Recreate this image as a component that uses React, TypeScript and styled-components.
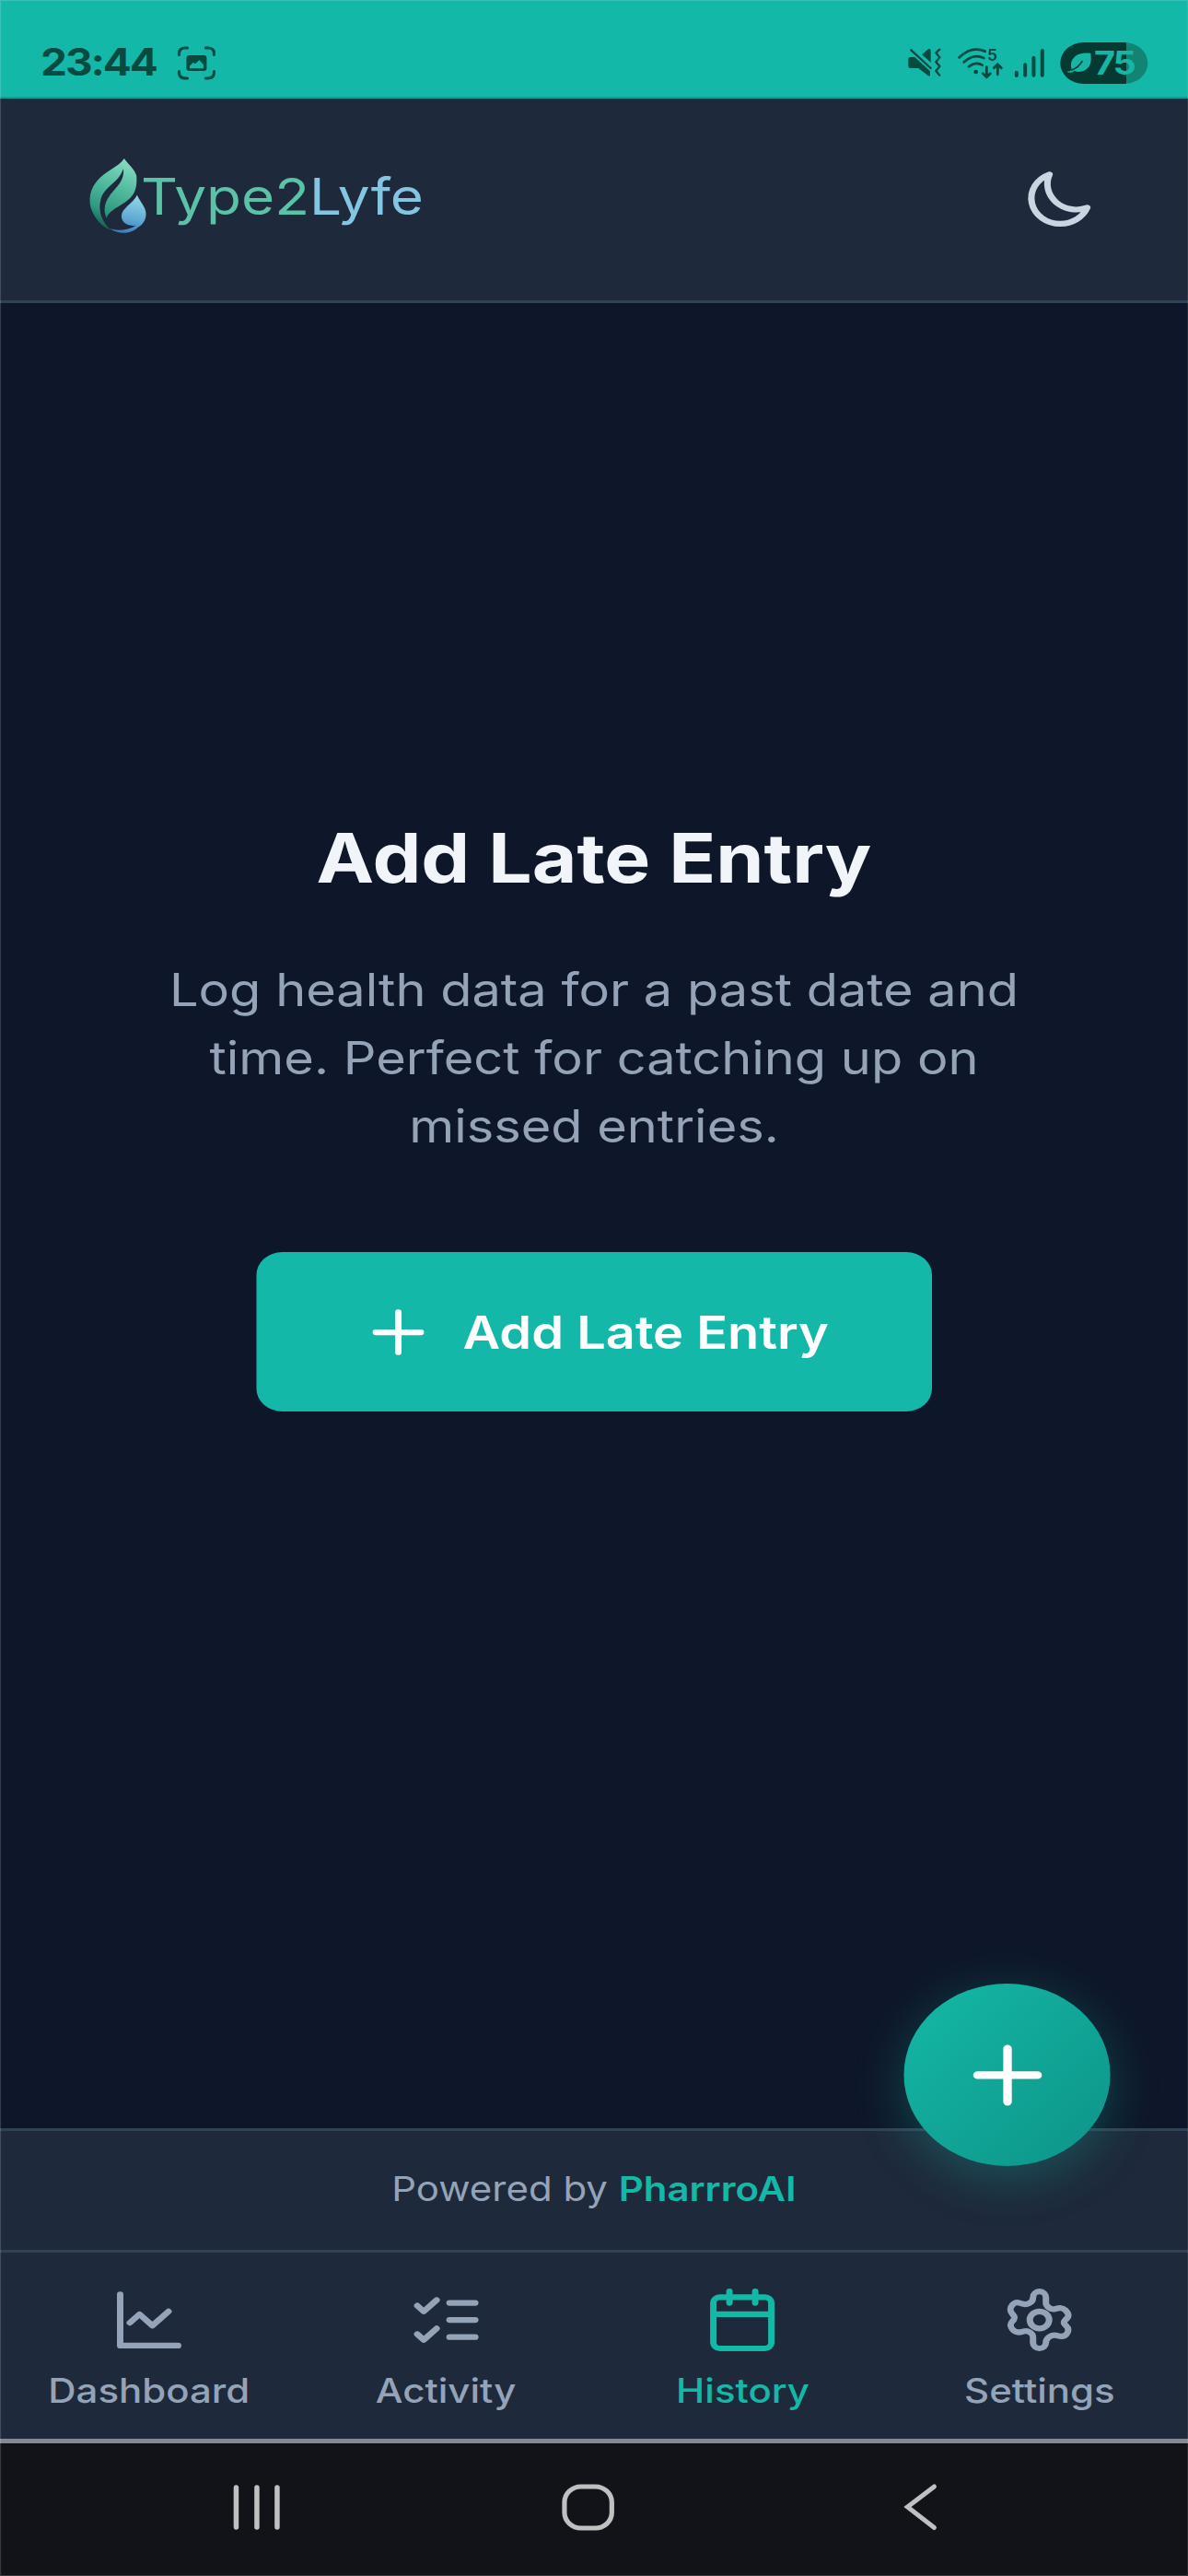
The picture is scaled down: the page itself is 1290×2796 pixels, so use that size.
import React from "react";
import styled, { createGlobalStyle } from "styled-components";

const STRETCH = 1.132;
const x = (px: number) => `${(px / STRETCH).toFixed(2)}px`;

const GlobalStyle = createGlobalStyle`
  * { box-sizing: border-box; }
  html, body { margin: 0; padding: 0; background: #0f172a; }
  body { width: 1290px; height: 2796px; overflow: hidden; }
`;

const Screen = styled.div`
  position: relative;
  display: flex;
  flex-direction: column;
  width: ${x(1290)};
  height: 2796px;
  transform: scaleX(${STRETCH});
  transform-origin: 0 0;
  background: #0e1729;
  color: #f1f5f9;
  font-family: Inter, "Liberation Sans", sans-serif;
  overflow: hidden;

  &::after {
    content: "";
    position: absolute;
    inset: 0;
    box-shadow: inset 0 0 0 1px rgba(255, 255, 255, 0.16);
    pointer-events: none;
  }
`;

const StatusBar = styled.div`
  display: flex;
  justify-content: space-between;
  height: 107px;
  padding: 30px ${x(44)} 0 ${x(44)};
  background: #14b8a8;
  border-bottom: 2px solid #179c93;
  color: #064a40;
`;

const StatusGroup = styled.div<{ $gap: number }>`
  display: flex;
  align-items: center;
  height: 76px;
  gap: ${(p) => x(p.$gap)};
`;

const Clock = styled.span`
  font-size: 40.6px;
  font-weight: 700;
  line-height: 76px;
  width: ${x(125)};
  letter-spacing: -1.8px;
  white-space: nowrap;
`;

const Battery = styled.div`
  display: flex;
  align-items: center;
  width: ${x(95)};
  height: 45px;
  margin-left: ${x(5)};
  padding-left: ${x(7)};
  gap: ${x(3)};
  border-radius: 23px;
  background: linear-gradient(90deg, #053a33 75%, #118474 75%);
  color: #17b5a3;
  font-size: 35px;
  font-weight: 700;
  letter-spacing: -1.8px;
`;

const Header = styled.header`
  display: flex;
  justify-content: space-between;
  align-items: flex-start;
  height: 221.5px;
  padding: 64px ${x(97)} 0 ${x(96)};
  background: #1e293b;
  border-bottom: 3px solid #334155;
`;

const Brand = styled.div`
  display: flex;
  align-items: flex-start;
`;

const BrandName = styled.span`
  margin-left: ${x(-7)};
  margin-top: 8px;
  font-size: 54.8px;
  line-height: 68px;
  color: #5ac2a6;
  white-space: nowrap;
`;

const BrandAccent = styled.span`
  color: #84c6e2;
`;

const ThemeButton = styled.button`
  display: flex;
  margin: 7px 0 0;
  padding: 0;
  border: 0;
  background: none;
  color: #cbd5e1;
`;

const Main = styled.main`
  flex: 1;
  display: flex;
  flex-direction: column;
  align-items: center;
  padding-top: 547px;
`;

const Title = styled.h1`
  margin: 0 0 50px;
  font-size: 74.2px;
  line-height: 111.3px;
  font-weight: 700;
  white-space: nowrap;
`;

const Description = styled.p`
  margin: 0 0 100px;
  font-size: 49.4px;
  line-height: 74.2px;
  text-align: center;
  color: #94a3b8;
  white-space: nowrap;
`;

const PrimaryButton = styled.button`
  display: flex;
  align-items: center;
  width: ${x(733)};
  height: 173px;
  padding: 0 0 0 ${x(112)};
  gap: ${x(28)};
  border: 0;
  border-radius: 24.7px;
  background: #14b8a8;
  color: #fff;
  font: 600 49.4px/74px Inter, sans-serif;
  white-space: nowrap;
`;

const Credit = styled.div`
  display: flex;
  justify-content: center;
  height: 131.5px;
  padding-top: 40px;
  background: #1e293b;
  border-top: 3px solid #334155;
  color: #94a3b8;
  font-size: 37.1px;
  line-height: 46px;
  white-space: pre;
`;

const CreditName = styled.span`
  font-weight: 600;
  color: #14b8a6;
`;

const TabBar = styled.nav`
  display: grid;
  grid-template-columns: repeat(4, 1fr);
  height: 205.5px;
  padding-left: 0.5px;
  background: #1e293b;
  border-top: 3px solid #334155;
`;

const Tab = styled.div<{ $active?: boolean }>`
  display: flex;
  flex-direction: column;
  align-items: center;
  padding-top: 36px;
  gap: 16.5px;
  color: ${(p) => (p.$active ? "#14b8a6" : "#94a3b8")};
  font-size: 37.1px;
  font-weight: 500;
  line-height: 48px;
`;

const SystemBar = styled.div`
  display: flex;
  height: 149px;
  padding: 44px 0 0 ${x(252)};
  background: #121318;
  border-top: 5px solid #868a93;
  color: #c0c0c2;
`;

const SystemKey = styled.div<{ $before: number }>`
  display: flex;
  margin-left: ${(p) => x(p.$before)};
`;

const Fab = styled.button`
  position: absolute;
  left: ${x(982)};
  top: 2153px;
  display: flex;
  align-items: center;
  justify-content: center;
  width: ${x(224)};
  height: 198px;
  padding: 0;
  border: 0;
  border-radius: 50%;
  background: linear-gradient(135deg, #14b8a6, #0d9488);
  box-shadow: 0 12px 50px rgba(20, 184, 166, 0.3);
  color: #fff;
`;

const Drawing = styled.svg<{ $w: number; $h: number }>`
  display: block;
  flex: none;
  width: ${(p) => x(p.$w)};
  height: ${(p) => p.$h}px;
  overflow: visible;
`;

type GlyphProps = { w: number; h: number; box?: string; children: React.ReactNode };

const Glyph = ({ w, h, box, children }: GlyphProps) => (
  <Drawing $w={w} $h={h} viewBox={box ?? `0 0 ${w} ${h}`} preserveAspectRatio="none">
    {children}
  </Drawing>
);

const Icon = ({ size = 24, children }: { size?: number; children: React.ReactNode }) => (
  <Glyph w={size * 3.5} h={size * 3.091} box="0 0 24 24">
    <g fill="none" stroke="currentColor" strokeWidth="2" strokeLinecap="round" strokeLinejoin="round">
      {children}
    </g>
  </Glyph>
);

const CaptureIcon = () => (
  <Glyph w={42} h={37}>
    <g fill="none" stroke="currentColor" strokeWidth="3.2" strokeLinecap="round">
      <path d="M2 9.5V8q0-6 7-6h2M31 2h2q7 0 7 6v1.5M40 27.5v1.5q0 6-7 6h-2M11 35H9q-7 0-7-6v-1.5" />
    </g>
    <path
      fillRule="evenodd"
      d="M13 10h16q3 0 3 3v11q0 3-3 3H13q-3 0-3-3V13q0-3 3-3zM13.5 24.3h15v-4l-4.5-5-4.5 4-2.2-1.5-3.8 4z"
      fill="currentColor"
    />
  </Glyph>
);

const MuteIcon = () => (
  <Glyph w={36} h={32} box="0 0 108 96">
    <path
      d="M8 30H22L72 76V88Q72 95 66 91L34 66H8Q1 66 1 59V37Q1 30 8 30ZM45 22L66 4Q74 1 74 8V47Z"
      fill="currentColor"
    />
    <path d="M10 7L74 66" stroke="currentColor" strokeWidth="7" strokeLinecap="round" />
    <path
      d="M103 5L91 16L103 31L91 46L103 60L91 75L103 89"
      fill="none"
      stroke="currentColor"
      strokeWidth="7"
      strokeLinecap="round"
      strokeLinejoin="round"
    />
  </Glyph>
);

const WifiText = styled.text`
  font: 600 52px Inter, sans-serif;
  fill: currentColor;
`;

const WifiIcon = () => (
  <Glyph w={49} h={33} box="0 0 147 99">
    <g fill="none" stroke="currentColor" strokeWidth="8.5" strokeLinecap="round">
      <path d="M4 31Q44-8 88 11M19 46Q52 17 84 33M35 61Q58 43 79 56" />
      <path d="M93 62V95M81 83L93 95L105 83M129 87V54M117 65L129 53L141 65" />
    </g>
    <circle cx="58" cy="78" r="7" fill="currentColor" />
    <WifiText x="95" y="43">5</WifiText>
  </Glyph>
);

const SignalIcon = () => (
  <Glyph w={33} h={31} box="0 0 99 93">
    <path
      d="M7 77V87M35 52V86M63 29V86M91 6V86"
      fill="none"
      stroke="currentColor"
      strokeWidth="12"
      strokeLinecap="round"
    />
  </Glyph>
);

const LeafIcon = () => (
  <Glyph w={27} h={22} box="0 0 80 66">
    <path d="M1 62Q12 62 17 56Q8 32 26 14Q42-1 78 2Q84 42 62 56Q42 68 26 60Q12 70 1 62Z" fill="currentColor" />
    <path d="M17 57Q38 50 50 29" stroke="#053a33" strokeWidth="5" fill="none" strokeLinecap="round" />
  </Glyph>
);

const LogoMark = () => (
  <Glyph w={64} h={83} box="110 93 192 249">
    <defs>
      <linearGradient id="leaf" x1="0.6" y1="0" x2="0.35" y2="1">
        <stop offset="0" stopColor="#83d9c0" />
        <stop offset="0.4" stopColor="#51b99d" />
        <stop offset="0.75" stopColor="#2e9880" />
        <stop offset="1" stopColor="#14594f" />
      </linearGradient>
      <linearGradient id="drop" x1="0.6" y1="0" x2="0.4" y2="1">
        <stop offset="0" stopColor="#93d8e6" />
        <stop offset="0.6" stopColor="#5fa9d4" />
        <stop offset="1" stopColor="#3d7dbd" />
      </linearGradient>
    </defs>
    <path
      fill="url(#leaf)"
      d="M226 96C208 124 166 135 136 171C107 206 108 251 130 284C143 305 160 321 184 330C151 303 141 265 149 232C160 186 207 178 223 130C228 170 199 190 178 218C158 245 160 268 168 290C178 265 200 259 222 243C250 224 270 207 266 152C259 130 240 116 226 96Z"
    />
    <path
      fill="url(#drop)"
      d="M268 215C278 238 296 252 297 276C297 297 286 312 270 321C248 343 206 344 180 325C205 333 242 329 264 314C234 318 217 304 217 283C218 257 254 243 268 215Z"
    />
  </Glyph>
);

const tabs = [
  {
    label: "Dashboard",
    icon: <path d="M3 3v18h18M6 13l3-3 4 4 5-5" />,
  },
  {
    label: "Activity",
    icon: <path d="m3 17 2 2 4-4M3 7l2 2 4-4M13 6h8M13 12h8M13 18h8" />,
  },
  {
    label: "History",
    active: true,
    icon: (
      <>
        <rect x="3" y="4" width="18" height="18" rx="2" />
        <path d="M16 2v4M8 2v4M3 10h18" />
      </>
    ),
  },
  {
    label: "Settings",
    icon: (
      <>
        <path d="M12 2a2 2.1 0 0 1 2 2.1V6.1C14 7.2 15.6 8.5 16.7 8.2C18.4 7.7 19.2 7.6 20.1 8.6C21 9.6 21.3 10.7 20.5 11.5C19.3 12.7 19.3 13.1 20.4 14.2C21.1 14.9 21.1 16.2 20.4 17C19.6 18 18.6 17.9 17.6 17.5C15.8 16.9 14 18.2 14 20A2 2 0 0 1 10 20V18C10 16.7 8.4 15.5 7.2 16C5.7 16.6 4.6 16.5 3.7 15.4C2.9 14.4 2.8 13.3 3.6 12.5C4.5 11.5 4.5 10.9 3.6 9.9C2.8 9 2.8 7.7 3.6 6.7C4.4 5.7 5.4 5.7 6.3 6.2C8.2 7 10 5.9 10 4.1A2 2.1 0 0 1 12 2Z" />
        <circle cx="12" cy="12" r="3" />
      </>
    ),
  },
];

export default function App() {
  return (
    <>
      <GlobalStyle />
      <Screen>
        <StatusBar>
          <StatusGroup $gap={23}>
            <Clock>23:44</Clock>
            <CaptureIcon />
          </StatusGroup>
          <StatusGroup $gap={12}>
            <StatusGroup $gap={18}>
              <MuteIcon />
              <WifiIcon />
            </StatusGroup>
            <StatusGroup $gap={12}>
              <SignalIcon />
              <Battery>
                <LeafIcon />
                75
              </Battery>
            </StatusGroup>
          </StatusGroup>
        </StatusBar>

        <Header>
          <Brand>
            <LogoMark />
            <BrandName>
              Type2<BrandAccent>Lyfe</BrandAccent>
            </BrandName>
          </Brand>
          <ThemeButton aria-label="Toggle theme">
            <Icon>
              <path d="M20.354 15.354A9 9 0 018.646 3.646 9.003 9.003 0 0012 21a9.003 9.003 0 008.354-5.646z" />
            </Icon>
          </ThemeButton>
        </Header>

        <Main>
          <Title>Add Late Entry</Title>
          <Description>
            Log health data for a past date and
            <br />
            time. Perfect for catching up on
            <br />
            missed entries.
          </Description>
          <PrimaryButton>
            <Icon>
              <path d="M12 5v14M5 12h14" />
            </Icon>
            Add Late Entry
          </PrimaryButton>
        </Main>

        <Credit>
          Powered by <CreditName>PharrroAI</CreditName>
        </Credit>

        <TabBar>
          {tabs.map((tab) => (
            <Tab key={tab.label} $active={tab.active}>
              <Icon>{tab.icon}</Icon>
              {tab.label}
            </Tab>
          ))}
        </TabBar>

        <SystemBar>
          <SystemKey $before={0}>
            <Glyph w={52} h={51}>
              <path d="M4 4V47M26.5 4V47M48.5 4V47" stroke="currentColor" strokeWidth="5.5" strokeLinecap="round" />
            </Glyph>
          </SystemKey>
          <SystemKey $before={306}>
            <Glyph w={57} h={51}>
              <rect x="2.8" y="3" width="51.4" height="45" rx="18" ry="17" fill="none" stroke="currentColor" strokeWidth="5.2" />
            </Glyph>
          </SystemKey>
          <SystemKey $before={314}>
            <Glyph w={36} h={51}>
              <path d="M33 3L4 25L33 47.5" fill="none" stroke="currentColor" strokeWidth="5" strokeLinecap="round" />
            </Glyph>
          </SystemKey>
        </SystemBar>

        <Fab aria-label="Add entry">
          <Icon size={32}>
            <path d="M12 5v14M5 12h14" />
          </Icon>
        </Fab>
      </Screen>
    </>
  );
}
